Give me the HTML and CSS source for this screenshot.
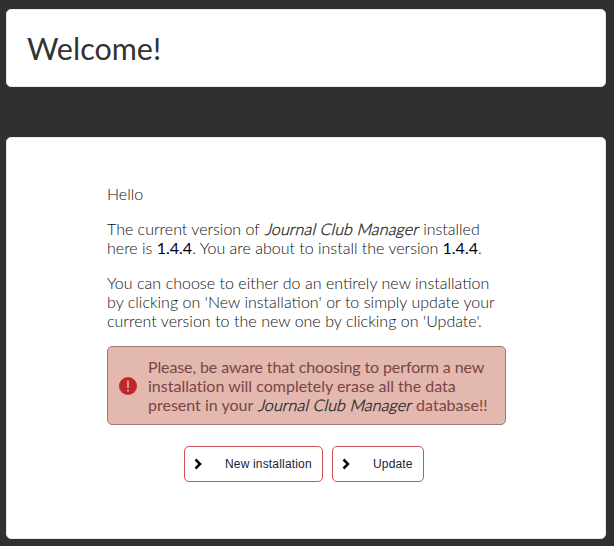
FILE: index.html
```html
<!DOCTYPE html>
<html lang="en">
<head>
<meta charset="utf-8">
<title>Journal Club Manager</title>
<link rel="stylesheet" href="styles.css">
</head>
<body>
<header class="panel header"><h1>Welcome!</h1></header>
<main class="panel content">
<p>Hello</p>
<p>The current version of <em>Journal Club Manager</em> installed<br>here is <strong>1.4.4</strong>. You are about to install the version <strong>1.4.4</strong>.</p>
<p class="choices">You can choose to either do an entirely new installation<br>by clicking on 'New installation' or to simply update your<br>current version to the new one by clicking on 'Update'.</p>
<div class="warning">
<svg class="warning-icon" viewBox="0 0 18 18"><circle cx="9" cy="9" r="9" fill="#c1272d"/><path d="M8.100 3.500h1.800v7.500H8.100zM8.100 12.500h1.800v2H8.100z" fill="#e3a8a0"/></svg>
<div><span class="tight">Please, be aware that choosing to perform a new</span><br>installation will completely erase all the data<br>present in your <em>Journal Club Manager</em> database!!</div>
</div>
<div class="actions">
<button class="new"><svg viewBox="0 0 8 12"><path d="M1.500 1.500L6 6L1.500 10.500"/></svg>New installation</button>
<button class="update"><svg viewBox="0 0 8 12"><path d="M1.500 1.500L6 6L1.500 10.500"/></svg>Update</button>
</div>
</main>
</body>
</html>
```
FILE: styles.css
```css
* { box-sizing: border-box; }
body { margin: 0; padding: 9px 8px 7px 6px; height: 546px; background: #303030; font-family: Lato, sans-serif; overflow: hidden; }
.panel { background: #fff; border: 1px solid #e8e8e8; border-radius: 5px; }
.header { height: 78px; padding: 19px 20px; }
h1 { margin: 0; font-size: 30.500px; line-height: 38px; font-weight: 400; color: #333; }
.content { margin-top: 50px; height: 402px; padding: 46px 99px 0 100px; font-size: 16px; line-height: 19px; font-weight: 300; color: #111; white-space: nowrap; }
p { margin: 0 0 16px; }
em { display: inline-block; width: 155px; padding-left: 2px; font-style: normal; font-weight: 300; letter-spacing: .13px; color: #222; -webkit-text-stroke: .3px #222; transform: skewX(-14deg); }
strong { font-weight: 400; color: #000020; }
.choices { word-spacing: .15px; }
.warning { display: flex; align-items: center; gap: 11px; width: 399px; height: 79px; padding: 0 11px; border: 1px solid #9f7770; border-radius: 5px; background: #e3b8ae; color: #7b4448; font-weight: 400; font-variant-ligatures: none; }
.tight { letter-spacing: -.11px; }
.warning-icon { width: 18px; height: 18px; flex: none; }
.actions { display: flex; gap: 9px; margin: 21px 0 0 77px; }
button { display: flex; align-items: center; height: 36px; padding: 0 9px; border: 1px solid #cf5151; border-radius: 5px; background: #fff; color: #223; font: 12px "Liberation Sans", Arial, sans-serif; letter-spacing: .17px; white-space: nowrap; }
button svg { width: 8px; height: 12px; margin-right: 23px; fill: none; stroke: #000; stroke-width: 2.500; }
.new { width: 139px; }
.update { width: 92px; }
```
